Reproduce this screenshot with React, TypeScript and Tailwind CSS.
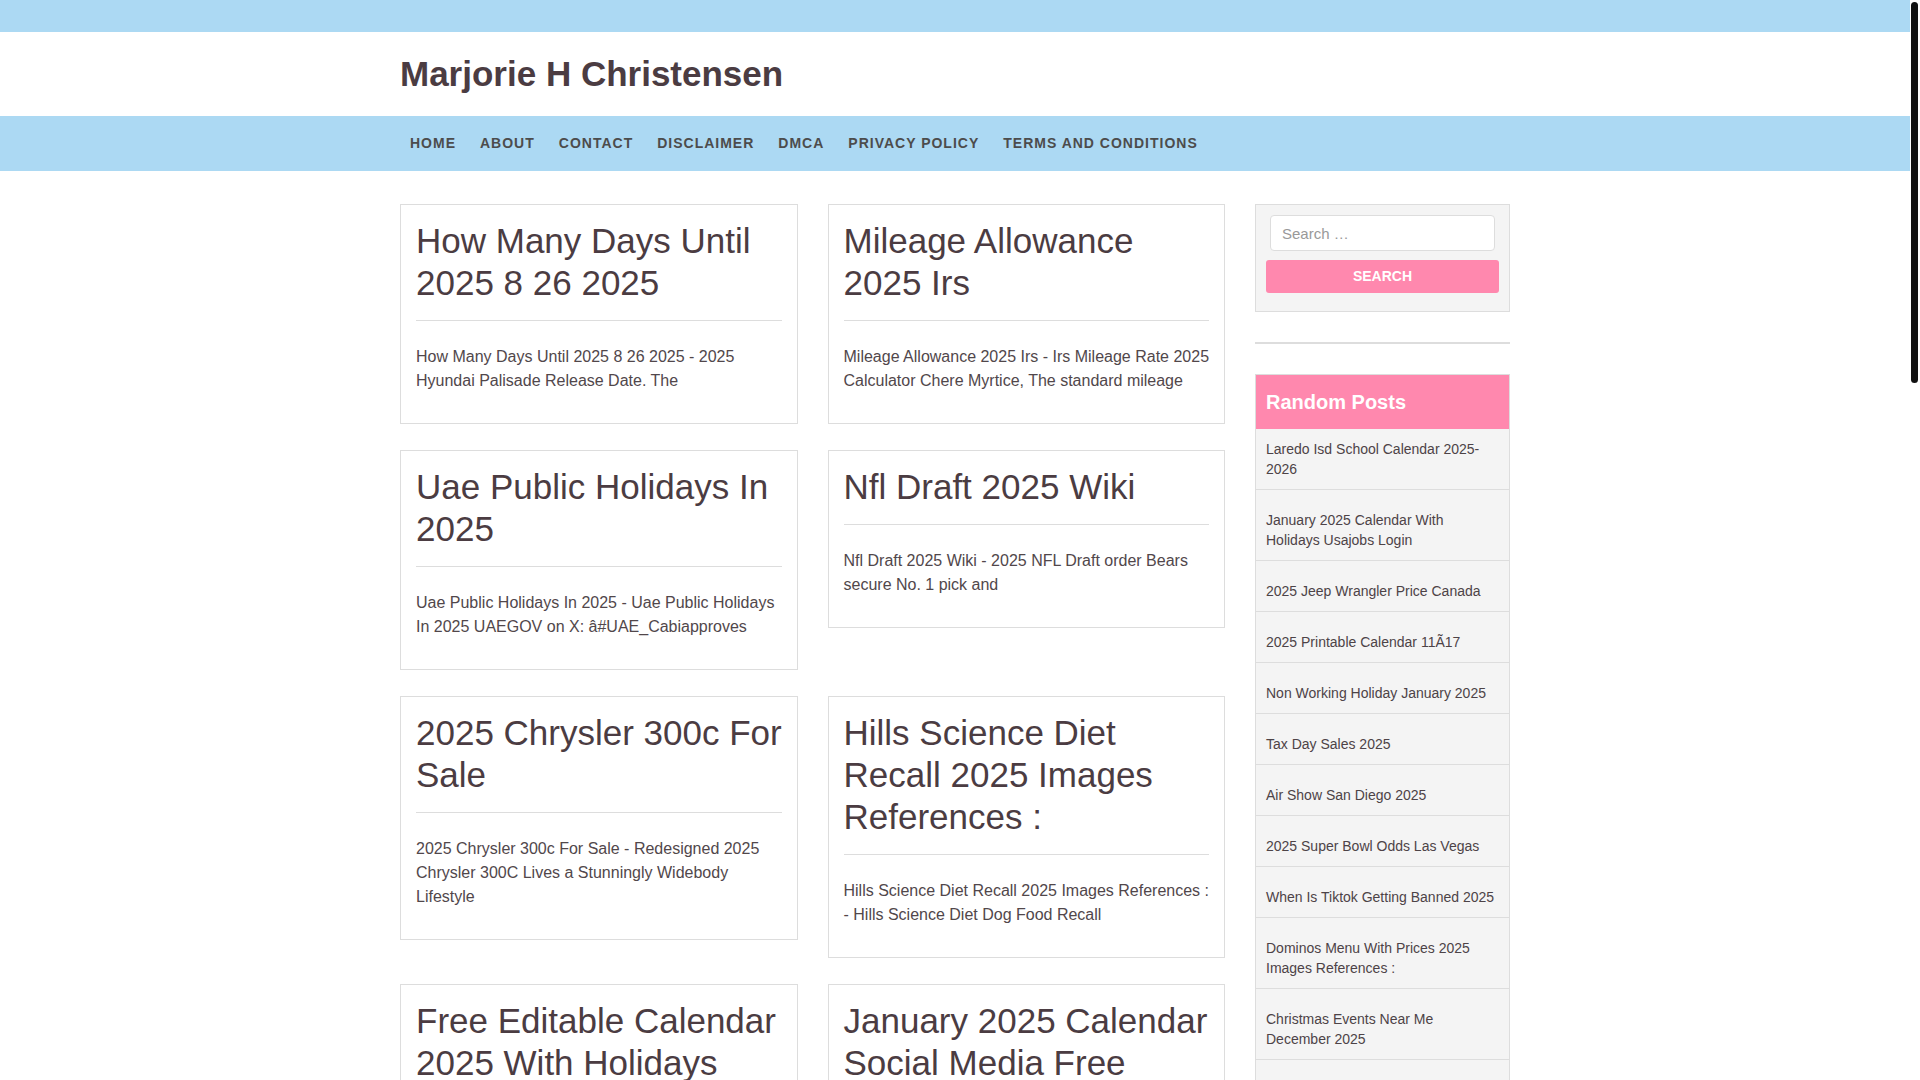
import React from "react";

const navItems = ["Home", "About", "Contact", "Disclaimer", "DMCA", "Privacy Policy", "Terms and Conditions"];

const posts: { title: string; excerpt: string }[] = [
  { title: "How Many Days Until 2025 8 26 2025", excerpt: "How Many Days Until 2025 8 26 2025 - 2025 Hyundai Palisade Release Date. The" },
  { title: "Mileage Allowance 2025 Irs", excerpt: "Mileage Allowance 2025 Irs - Irs Mileage Rate 2025 Calculator Chere Myrtice, The standard mileage" },
  { title: "Uae Public Holidays In 2025", excerpt: "Uae Public Holidays In 2025 - Uae Public Holidays In 2025 UAEGOV on X: â#UAE_Cabiapproves" },
  { title: "Nfl Draft 2025 Wiki", excerpt: "Nfl Draft 2025 Wiki - 2025 NFL Draft order Bears secure No. 1 pick and" },
  { title: "2025 Chrysler 300c For Sale", excerpt: "2025 Chrysler 300c For Sale - Redesigned 2025 Chrysler 300C Lives a Stunningly Widebody Lifestyle" },
  { title: "Hills Science Diet Recall 2025 Images References :", excerpt: "Hills Science Diet Recall 2025 Images References : - Hills Science Diet Dog Food Recall" },
  { title: "Free Editable Calendar 2025 With Holidays Printable", excerpt: "Free Editable Calendar 2025 With Holidays Printable - Free Printable Calendar 2025 With Holidays" },
  { title: "January 2025 Calendar Social Media Free Download", excerpt: "January 2025 Calendar Social Media Free Download - January 2025 Calendar Template" },
  { title: "Memorial Day Weekend 2025 Events", excerpt: "Memorial Day Weekend 2025 Events - Memorial Day 2025 Parade And Festival Guide" },
  { title: "2025 Honda Pilot Trim Levels", excerpt: "2025 Honda Pilot Trim Levels - 2025 Honda Pilot Review, Pricing, and Specs" },
  { title: "Spring Break 2025 Dates Texas", excerpt: "Spring Break 2025 Dates Texas - Texas School Districts Spring Break Calendar" },
  { title: "Fafsa Deadline 2025-2026", excerpt: "Fafsa Deadline 2025-2026 - FAFSA Deadlines For The 2025-26 School Year" },
  { title: "Best Family Suv 2025", excerpt: "Best Family Suv 2025 - The Best SUVs For Families In 2025 Ranked" },
  { title: "Chinese New Year 2025 Animal", excerpt: "Chinese New Year 2025 Animal - 2025 Year Of The Snake Meaning And Traditions" },
  { title: "Nba All Star Game 2025 Tickets", excerpt: "Nba All Star Game 2025 Tickets - NBA All-Star 2025 San Francisco Tickets" },
  { title: "Federal Pay Raise 2025 Chart", excerpt: "Federal Pay Raise 2025 Chart - 2025 GS Pay Scale Table With Locality" },
  { title: "Easter Sunday 2025 Date", excerpt: "Easter Sunday 2025 Date - When Is Easter 2025 Holy Week Dates" },
  { title: "2025 Toyota Camry Hybrid Mpg", excerpt: "2025 Toyota Camry Hybrid Mpg - 2025 Toyota Camry Fuel Economy Ratings" },
  { title: "World Cup 2025 Schedule Cricket", excerpt: "World Cup 2025 Schedule Cricket - Women's Cricket World Cup 2025 Fixtures" },
  { title: "Social Security Increase 2025 Amount", excerpt: "Social Security Increase 2025 Amount - 2025 COLA Social Security Benefits" },
];

const randomPosts = [
  "Laredo Isd School Calendar 2025-2026",
  "January 2025 Calendar With Holidays Usajobs Login",
  "2025 Jeep Wrangler Price Canada",
  "2025 Printable Calendar 11Ã17",
  "Non Working Holiday January 2025",
  "Tax Day Sales 2025",
  "Air Show San Diego 2025",
  "2025 Super Bowl Odds Las Vegas",
  "When Is Tiktok Getting Banned 2025",
  "Dominos Menu With Prices 2025 Images References :",
  "Christmas Events Near Me December 2025",
  "Memorial Day 2025 Date",
  "2025 Honda Pilot Release Date",
  "Ramadan 2025 Start Date",
  "Kentucky Derby 2025 Odds",
];

function Card({ title, excerpt }: { title: string; excerpt: string }) {
  return (
    <article className="border border-[#ddd] bg-white pt-[15px] pb-[15px] pl-[15px] pr-[12px]">
      <h2 className="text-[35px] leading-[42px] font-normal text-[#4b3c42]">{title}</h2>
      <div className="mt-4 mr-[3px] h-px bg-[#dddddd]" />
      <p className="mt-[24px] mb-[15px] text-[16px] leading-[24px] text-[#51474b]">{excerpt}</p>
    </article>
  );
}

export default function App() {
  return (
    <div className="flex min-h-screen bg-white font-['Liberation_Sans',Arial,sans-serif]">
      <div className="min-w-0 flex-1">
        <div className="h-[32px] bg-[#acd9f3]" />
        <header className="h-[84px]">
          <div className="mx-auto flex h-full w-[1110px] items-center">
            <h1 className="text-[35px] leading-[40px] font-bold text-[#4b3c42]">Marjorie H Christensen</h1>
          </div>
        </header>
        <nav className="h-[55px] bg-[#acd9f3]">
          <ul className="mx-auto flex h-full w-[1110px] items-center">
            {navItems.map((n) => (
              <li key={n} className="px-3 first:pl-[10px] text-[14px] font-bold uppercase tracking-[1px] text-[#4c4c4c]">
                {n}
              </li>
            ))}
          </ul>
        </nav>

        <div className="mx-auto mt-[33px] flex w-[1110px] items-start gap-[30px]">
          <main className="grid w-[825px] grid-cols-2 items-start gap-x-[30px] gap-y-[26px]">
            {posts.map((p) => (
              <Card key={p.title} title={p.title} excerpt={p.excerpt} />
            ))}
          </main>

          <aside className="w-[255px]">
            <div className="border border-[#ddd] bg-[#f4f4f4] px-[10px] pt-[10px] pb-[18px]">
              <div className="px-[4px]">
                <input
                  type="text"
                  placeholder="Search …"
                  className="h-[36px] w-full rounded-[4px] border border-[#ddd] bg-white px-[11px] text-[15px] text-[#555] placeholder:text-[#999] outline-none"
                />
              </div>
              <button className="mt-[9px] h-[33px] w-full rounded-[3px] bg-[#ff88ae] text-[14px] font-semibold uppercase text-white">
                Search
              </button>
            </div>

            <div className="my-[30px] h-[2px] bg-[#dddddd]" />

            <div className="border border-[#ddd] bg-[#f4f4f4]">
              <h3 className="flex h-[54px] items-center bg-[#ff88ae] px-[10px] text-[20px] font-bold text-white">
                Random Posts
              </h3>
              <ul>
                {randomPosts.map((r) => (
                  <li
                    key={r}
                    className="border-b border-[#ddd] px-[10px] pt-[20px] pb-[10px] text-[14px] leading-[20px] text-[#4d4347] first:pt-[10px] last:border-b-0"
                  >
                    {r}
                  </li>
                ))}
              </ul>
            </div>
          </aside>
        </div>

        <footer className="mt-[60px] bg-[#acd9f3] py-[24px]">
          <div className="mx-auto w-[1110px] text-center text-[14px] text-[#4c4c4c]">
            Copyright © 2025 Marjorie H Christensen. All rights reserved.
          </div>
        </footer>
      </div>

      <div className="sticky top-0 h-[1080px] w-[10px] shrink-0 self-start bg-white">
        <div className="mt-[2px] ml-[1px] h-[381px] w-[7px] rounded-full bg-[#111]" />
      </div>
    </div>
  );
}
